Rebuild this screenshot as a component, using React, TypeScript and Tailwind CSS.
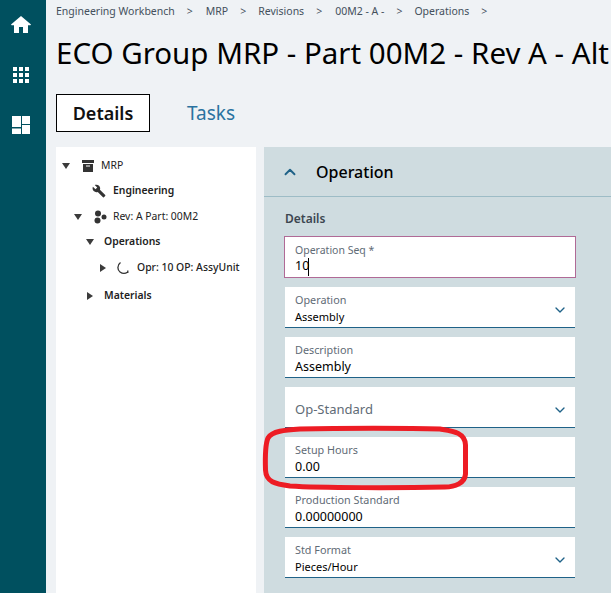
import React from 'react';
import { ChevronDown, ChevronUp } from 'lucide-react';

const Caret = ({ open }: { open?: boolean }) => (
  <svg width="8" height="8" viewBox="0 0 8 8" className="shrink-0 fill-[#3b3b3b]">
    {open ? <path d="M0 1h8L4 7z" /> : <path d="M1 0l6 4-6 4z" />}
  </svg>
);

interface FieldProps {
  label?: string;
  value: string;
  select?: boolean;
  big?: boolean;
  small?: boolean;
}

const Field = ({ label, value, select, big, small }: FieldProps) => (
  <div className="relative h-[41px] w-[290px] border-b border-[#1f6288] bg-white px-[10px]">
    {big ? (
      <div className="pt-[13px] text-[13px] leading-[18px] text-[#5f6b76]">{value}</div>
    ) : (
      <>
        <div className="pt-[5px] text-[10.8px] leading-[15px] text-[#5f6b76]">{label}</div>
        <div className={`${small ? 'text-[11px]' : 'text-[12.5px]'} leading-[20px] text-black`}>{value}</div>
      </>
    )}
    {select && <ChevronDown className="absolute right-[7px] top-[15px] text-[#1f6288]" size={16} strokeWidth={2} />}
  </div>
);

const TreeRow = ({ indent, caret, icon, label, weight }: { indent: number; caret?: 'open' | 'closed'; icon?: React.ReactNode; label: string; weight?: string }) => (
  <div className="flex h-[25.5px] items-center" style={{ paddingLeft: indent }}>
    {caret && <Caret open={caret === 'open'} />}
    {icon}
    <span className={`text-[10.4px] text-[#222] ${weight || ''}`}>{label}</span>
  </div>
);

export default function App() {
  return (
    <div className="relative flex h-[593px] w-[611px] overflow-hidden bg-[#eff2f5] font-['Noto_Sans',sans-serif]">
      {/* Side nav */}
      <div className="flex w-[46px] shrink-0 flex-col items-center bg-[#00505f] pr-[4px] pt-[14px]">
        <svg width="20" height="20" viewBox="0 0 20 20" className="fill-white">
          <path d="M10 2L0 10.500l.6.7H3V19h5v-6h4v6h5v-7.800h2.400l.6-.7z" />
        </svg>
        <svg width="18" height="18" viewBox="0 0 18 18" className="mt-[31px] fill-white">
          <path d="M1 2h4v4H1zM7 2h4v4H7zM13 2h4v4h-4zM1 8h4v4H1zM7 8h4v4H7zM13 8h4v4h-4zM1 14h4v4H1zM7 14h4v4H7zM13 14h4v4h-4z" />
        </svg>
        <svg width="20" height="20" viewBox="0 0 20 20" className="mt-[32px] fill-white">
          <path d="M1 1h9v11H1zM11 1h8v8h-8zM11 10h8v9h-8zM1 13.500h9V19H1z" />
        </svg>
      </div>

      {/* Main */}
      <div className="min-w-0 flex-1">
        <div className="flex h-[23px] items-center gap-[12px] whitespace-nowrap pl-[10px] text-[10.500px] text-[#44505c]">
          <span>Engineering Workbench</span><span>&gt;</span>
          <span className="ml-[1px]">MRP</span><span>&gt;</span>
          <span>Revisions</span><span>&gt;</span>
          <span className="ml-[1px]">00M2 - A -</span><span>&gt;</span>
          <span>Operations</span><span>&gt;</span>
        </div>
        <h1 className="mt-[10px] whitespace-nowrap pl-[10px] text-[29.500px] leading-[40px] text-black">ECO Group MRP - Part 00M2 - Rev A - Alt</h1>

        <div className="ml-[10px] mt-[21px] flex items-center">
          <div className="flex h-[38px] w-[94px] items-center justify-center border border-black bg-white text-[18px] font-semibold text-[#111]">Details</div>
          <div className="ml-[37px] text-[19px] text-[#2a72a0]">Tasks</div>
        </div>

        <div className="ml-[10px] mt-[15px] flex gap-[8px]">
          {/* Tree */}
          <div className="h-[446px] w-[200px] shrink-0 bg-white pt-[6px]">
            <TreeRow indent={6} caret="open" label="MRP" icon={
              <svg width="12" height="12" viewBox="0 0 12 12" className="ml-[12px] mr-[7px] fill-[#333]"><path d="M0 0h12v3H0zM1 4h10v8H1z" /><path d="M4 5.500h4v1H4z" className="fill-white" /></svg>
            } />
            <TreeRow indent={36} weight="font-semibold" label="Engineering" icon={
              <svg width="14" height="14" viewBox="0 0 24 24" className="mr-[7px] fill-[#333]"><path d="M22.700 19l-9.100-9.100c.9-2.300.4-5-1.500-6.900-2-2-5-2.400-7.400-1.300L9 6 6 9 1.600 4.700C.4 7.100.9 10.100 2.900 12.100c1.900 1.900 4.600 2.400 6.900 1.500l9.100 9.100c.4.400 1 .4 1.400 0l2.300-2.300c.5-.4.5-1.100.1-1.400z" /></svg>
            } />
            <TreeRow indent={18} caret="open" label="Rev: A Part: 00M2" icon={
              <svg width="14" height="14" viewBox="0 0 14 14" className="ml-[11px] mr-[6px] fill-[#333]"><circle cx="5" cy="3.500" r="3" /><circle cx="4.500" cy="10.500" r="3" /><circle cx="11" cy="7" r="2.500" /></svg>
            } />
            <TreeRow indent={30} caret="open" weight="font-semibold" label="Operations" icon={<span className="w-[10px]" />} />
            <TreeRow indent={43} caret="closed" weight="font-medium" label="Opr: 10 OP: AssyUnit" icon={
              <svg width="14" height="14" viewBox="0 0 14 14" fill="none" stroke="#333" strokeWidth="1.300" className="ml-[9px] mr-[7px]"><path d="M4.500 1.500C1 4 1.200 9 4 11c2.500 1.800 5.500 1.600 7.500.2M11.800 9.500v2.500" /></svg>
            } />
            <div className="h-[2.500px]" />
            <TreeRow indent={30} caret="closed" weight="font-semibold" label="Materials" icon={<span className="w-[10px]" />} />
          </div>

          {/* Operation panel */}
          <div className="h-[446px] flex-1 bg-[#cfdce0]">
            <div className="flex h-[50px] items-center border-b border-[#9dbcc6] pl-[17px]">
              <ChevronUp size={18} strokeWidth={2.500} className="text-[#1f6288]" />
              <span className="ml-[17px] text-[16px] font-medium text-black">Operation</span>
            </div>
            <div className="pl-[21px]">
              <div className="pb-[9px] pt-[13px] text-[12px] font-semibold leading-[17px] text-[#3c4650]">Details</div>
              <div className="flex flex-col gap-[9px]">
                <div className="relative -mx-px h-[42px] w-[292px] border border-[#b06a96] bg-white px-[10px]">
                  <div className="pt-[6px] text-[10.500px] leading-[15px] text-[#5f6b76]">Operation Seq *</div>
                  <div className="text-[12.500px] leading-[16px] text-black">10</div>
                  <div className="absolute left-[23px] top-[21px] h-[18px] w-px bg-black" />
                </div>
                <Field select small label="Operation" value="Assembly" />
                <Field label="Description" value="Assembly" />
                <Field select big value="Op-Standard" />
                <Field label="Setup Hours" value="0.00" />
                <Field label="Production Standard" value="0.00000000" />
                <Field select small label="Std Format" value="Pieces/Hour" />
              </div>
            </div>
          </div>
        </div>
      </div>

      {/* Red annotation */}
      <svg width="611" height="593" className="pointer-events-none absolute left-0 top-0" fill="none">
        <path d="M300 429 C340 428 410 428 440 429 C452 431 465 432 465.500 445 L465.500 474 C465 483 455 487 445 487 C400 488 320 488 290 486 C275 484 266 482 265.500 470 C265 455 265 445 268 438 C272 431 285 430 300 429 Z" stroke="#ed1c24" strokeWidth="5" />
      </svg>
    </div>
  );
}
